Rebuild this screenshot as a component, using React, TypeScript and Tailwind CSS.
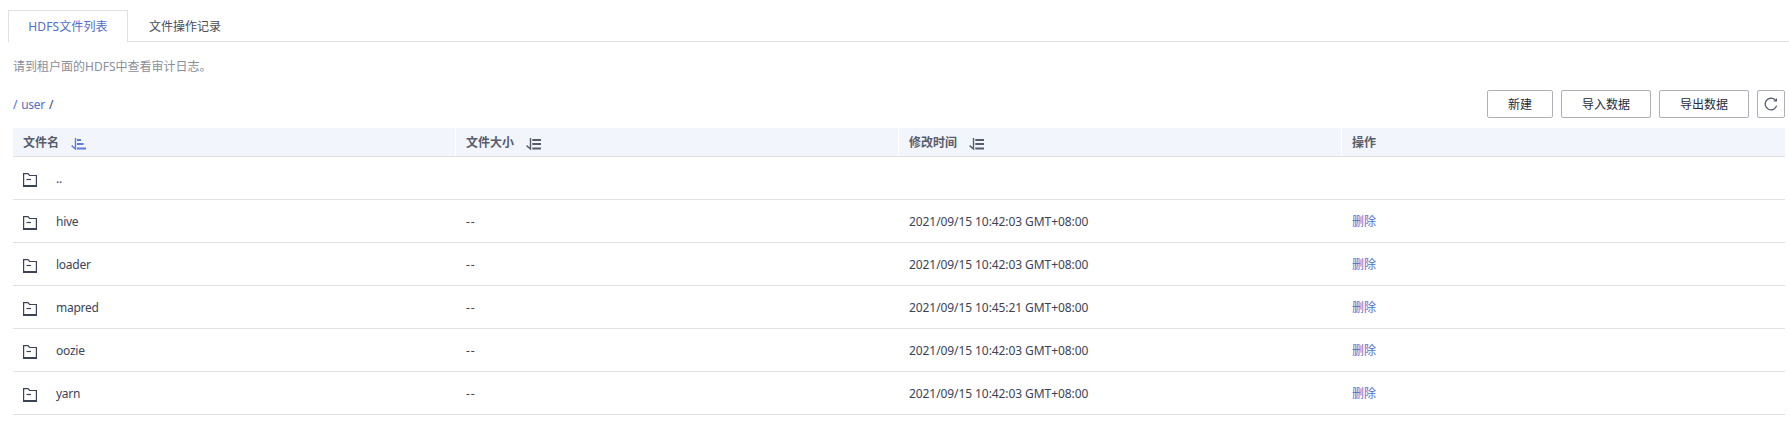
import React from "react";

const LINE = "border-[#dfe1e6]";

function FolderIcon() {
  return (
    <svg width="14" height="14" viewBox="0 0 14 14" fill="none" stroke="#3c4356" className="block shrink-0">
      <path d="M0.6 13V0.7H5L6.6 2.5H13.4V13" strokeWidth="1.2" />
      <path d="M0 13H14" strokeWidth="2" />
      <path d="M3.5 6.5H8" strokeWidth="1.2" />
    </svg>
  );
}

function SortIcon({ active = false }: { active?: boolean }) {
  const c = active ? "#5e7ce0" : "#575d6c";
  return (
    <svg width="15" height="12" viewBox="0 0 15 12" fill="none" stroke={c} className="block shrink-0">
      <path d="M4.5 0V11L0.6 7.6" strokeWidth="1.4" />
      {active ? (
        <path d="M6 2H10M6 6H12.5M6 10.5H15" strokeWidth="2" />
      ) : (
        <path d="M6.3 2H15M6.3 6H15M6.3 10.5H15" strokeWidth="1.8" />
      )}
    </svg>
  );
}

function RefreshIcon() {
  return (
    <svg width="14" height="14" viewBox="0 0 14 14" fill="none" stroke="#575d6c" strokeWidth="1.3" className="block">
      <path d="M12.6 8.6A5.8 5.8 0 1 1 11.2 3" />
      <path d="M13 1V4.6H9.4Z" fill="#575d6c" stroke="none" />
    </svg>
  );
}

function Button({ label, width }: { label: string; width: string }) {
  return (
    <button className={`flex h-7 items-center justify-center rounded-[2px] border border-[#adb0b8] bg-white pt-[2px] text-[#252b3a] ${width}`}>
      {label}
    </button>
  );
}

const rows = [
  { name: "..", time: "" },
  { name: "hive", time: "2021/09/15 10:42:03 GMT+08:00" },
  { name: "loader", time: "2021/09/15 10:42:03 GMT+08:00" },
  { name: "mapred", time: "2021/09/15 10:45:21 GMT+08:00" },
  { name: "oozie", time: "2021/09/15 10:42:03 GMT+08:00" },
  { name: "yarn", time: "2021/09/15 10:42:03 GMT+08:00" },
];

const headers = ["文件名", "文件大小", "修改时间", "操作"];

export default function App() {
  return (
    <div className="h-[422px] w-full overflow-hidden bg-white font-['Noto_Sans','Noto_Sans_CJK_SC',sans-serif] text-[12px] leading-4 text-[#3c4356]">
      <div className="flex h-[42px] pt-[10px] pl-2">
        <div className={`flex w-[120px] items-center justify-center border border-b-0 ${LINE} pt-px text-[#526ecc]`}>
          <span className="tracking-[0.1px]">HDFS文件列表</span>
        </div>
        <div className={`flex flex-1 items-center border-b ${LINE} pt-[3px] pl-[21px] text-[#464c59]`}>文件操作记录</div>
      </div>
      <div className="pr-1 pl-[13px]">
        <p className="mt-[17px] h-4 text-[#8a8e99]">请到租户面的HDFS中查看审计日志。</p>
        <div className="mt-[15px] flex h-7 items-center justify-between">
          <div className="flex gap-1 pt-[2px] tracking-[-0.3px]">
            <span className="text-[#526ecc]">/</span>
            <span className="text-[#526ecc]">user</span>
            <span>/</span>
          </div>
          <div className="flex gap-2">
            <Button label="新建" width="w-[66px]" />
            <Button label="导入数据" width="w-[90px]" />
            <Button label="导出数据" width="w-[90px]" />
            <button className="flex size-7 items-center justify-center rounded-[2px] border border-[#adb0b8] bg-white">
              <RefreshIcon />
            </button>
          </div>
        </div>
        <div className={`mt-[10px] grid h-[29px] grid-cols-4 border-b ${LINE} bg-[#f2f5fc] font-semibold text-[#575d6c]`}>
          {headers.map((h, i) => (
            <div key={h} className={`flex items-center pl-[10px] ${i < 3 ? "border-r border-white" : ""}`}>
              <span className="mr-3 pt-[2px]">{h}</span>
              {i < 3 && (
                <div className="pt-[3px]">
                  <SortIcon active={i === 0} />
                </div>
              )}
            </div>
          ))}
        </div>
        {rows.map((r) => (
          <div key={r.name} className={`grid h-[43px] grid-cols-4 items-center border-b ${LINE}`}>
            <div className="flex items-center pl-[10px]">
              <div className="mr-[19px] pt-[3px]">
                <FolderIcon />
              </div>
              <span className="pt-[2px] tracking-[-0.25px]">{r.name}</span>
            </div>
            <div className="pt-[2px] pl-[10px] tracking-[1px]">{r.time && "--"}</div>
            <div className="pt-[2px] pl-[10px] tracking-[-0.08px]">{r.time}</div>
            <div className="pt-[2px] pl-[10px] text-[#526ecc]">{r.time && "删除"}</div>
          </div>
        ))}
      </div>
    </div>
  );
}
